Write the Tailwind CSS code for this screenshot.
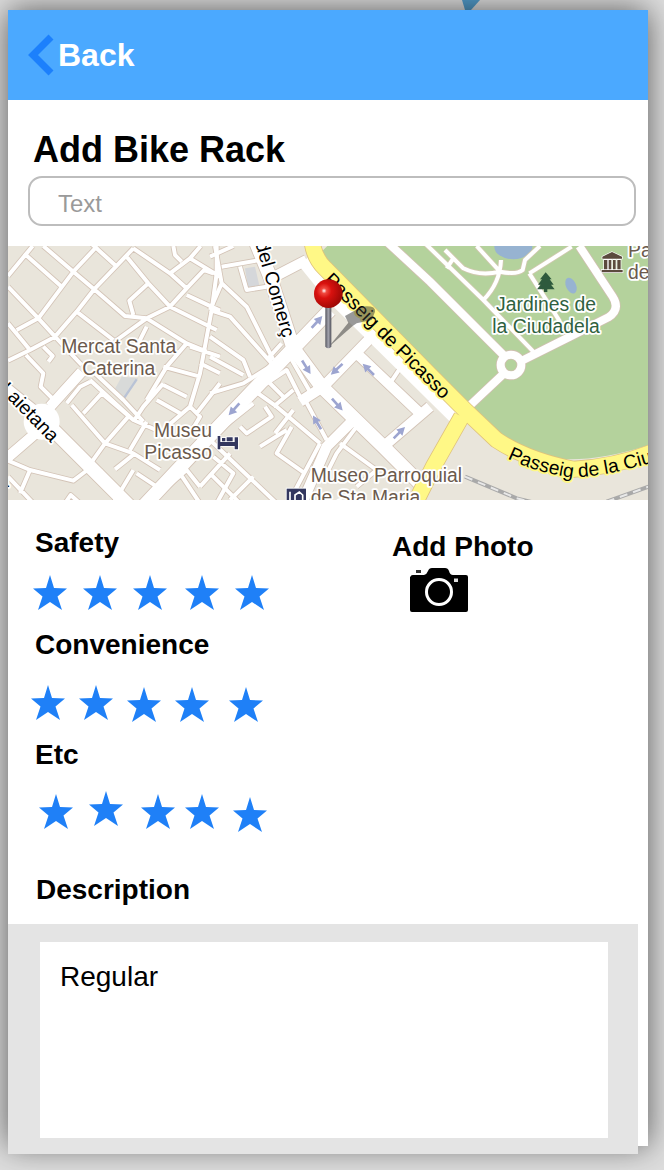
<!DOCTYPE html>
<html lang="en">
<head>
<meta charset="utf-8">
<meta name="viewport" content="width=device-width, initial-scale=1">
<title>Add Bike Rack</title>
<script src="https://cdn.jsdelivr.net/npm/@tailwindcss/browser@4"></script>
</head>
<body class="relative min-h-screen bg-[#dedede] pt-[10px] pr-4 pb-6 pl-2 font-['Liberation_Sans',Arial,sans-serif] text-black">
<svg class="absolute top-0 left-[462px] h-[10px] w-[18px]" viewBox="0 0 18 10" aria-hidden="true"><path d="M0 0H18L9 10H3Z" fill="#529ccb"/></svg>
<svg class="absolute h-0 w-0" aria-hidden="true">
  <symbol id="star" viewBox="0 0 34 35"><path d="M17 0L21 13L34 13.5L24.5 21.5L29 35L17 27L5 35L9.500 21.5L0 13.5L13 13Z" fill="#1f80f7"/></symbol>
</svg>

<main class="relative flow-root bg-white shadow-[0_0_30px_rgba(0,0,0,0.6)]">
  <header class="flex h-[90px] items-center bg-[#4ba9ff] pl-5">
    <button type="button" class="flex items-center gap-1 text-[32px] leading-9 font-bold text-white">
      <svg class="h-[42px] w-[26px]" viewBox="0 0 26 42" aria-hidden="true"><path d="M23 3L5 21L23 39" fill="none" stroke="#1c80fc" stroke-width="7"/></svg>
      Back
    </button>
  </header>

  <section class="px-5 pt-[30px] pb-5">
    <h1 class="pl-[5px] text-4xl leading-10 font-bold"><label for="rack">Add Bike Rack</label></h1>
    <input id="rack" type="text" placeholder="Text" class="mt-1.5 -mr-2 block h-[50px] w-[calc(100%+8px)] rounded-[14px] border-2 border-[#bdbdbd] bg-white px-7 pt-1.5 text-2xl text-black placeholder:text-[#9a9a9a]">
  </section>

  <svg class="block h-[254px] w-full" viewBox="24 18 1920 762" preserveAspectRatio="xMidYMid slice" role="img" aria-label="Map of the area around Passeig de Picasso">
    <defs>
      <g id="minor" fill="none" stroke-linejoin="round">
        <path d="M24 108L98 18M72 40L185 140M130 18L220 95L285 150L375 228L440 235M24 140L115 235L165 290L245 375M115 235L220 95L292 18M285 145L230 215L165 290M262 0L345 75M400 25L285 145M230 215L340 300M380 50L445 130L510 200M445 130L388 182L400 225M400 25L510 100L560 145L510 200M510 100L570 55L602 18M520 18L525 45L545 65M510 200L440 235L350 300M440 235L560 310L620 335M510 200L650 270M560 145L612 90L640 100M570 55L660 110M560 165L660 212M50 270L115 235M24 250L90 330L24 362M90 330L165 290M78 345L130 400L122 440L162 480M130 320L158 348L145 365M24 662L90 690L220 722L262 690M90 690L60 760M24 710L100 790M200 490L240 440L270 425M215 495L315 610L265 680M250 520L305 460L400 540M315 610L385 530M270 420L400 540L480 575M285 400L370 480L430 545M490 430L430 500L400 545M315 610L400 640L480 690M405 640L345 688M440 545L390 630M490 380L600 410M490 435L560 470M560 310L500 380L440 480M570 320L660 350M600 370L660 400M570 500L500 560M590 520L660 430M440 260L410 320M470 480L540 520M480 760L560 690L600 740M540 700L600 790M300 690L360 770M410 700L470 740L520 690M570 500L600 530L570 580M640 650L700 700L650 790M600 740L690 640M195 790L212 765L240 790M400 690L340 790M650 0L650 100L635 210L600 400L570 500"/>
        <g transform="translate(630 0)"><path d="M0 50L70 18M15 18L35 130L0 210M35 130L110 200L190 360M35 80L150 60M0 210L60 230L185 370M0 290L100 360L120 410M0 350L100 405M0 460L100 430L195 370M240 350L300 455M140 450L230 390L275 480M190 500L250 450M130 450L200 500L330 610M170 360L215 310M250 510L195 580M245 560L200 640L285 700M330 610L240 780M30 570L130 490M0 600L200 790M90 560L110 580L185 530L165 500M150 620L230 570M60 780L130 710M0 700L90 790M580 370L540 430M280 470L350 600M170 420L220 470M390 610L500 690M440 560L380 640L350 700M500 690L440 740M90 80L110 150L170 140"/></g>
      </g>
      <g id="major" fill="none">
        <path d="M245 395L150 500M130 560L20 655"/>
        <g transform="translate(630 0)"><path d="M290 60L165 125M340 440L480 295M440 340L625 515M660 500L520 620L600 700M430 540L350 620L280 780M340 440L270 485"/></g>
      </g>
      <g id="avenue" fill="none">
        <path d="M0 435L130 540L390 800M420 810L570 650L880 325L990 210M765 0L810 110L880 325L965 440L1150 620L1260 730"/>
      </g>
      <g id="parkwide" fill="none">
        <path d="M1155 0L1290 125L1515 350M1570 360L1710 290L1825 232Q1862 208 1838 170L1738 18M1510 402L1390 515"/><circle cx="1533" cy="375" r="31"/>
      </g>
      <g id="parkthin" fill="none">
        <path d="M1270 5L1450 180L1600 335M1335 30L1390 85Q1440 110 1500 95Q1550 105 1568 90L1575 60L1620 18M1588 100L1715 20M1588 100L1680 245M1450 180Q1500 130 1503 60M1430 18L1500 95M1360 55L1340 85"/>
      </g>
      <path id="yellow" d="M935 -10Q938 50 975 85L1290 405L1400 515L1490 600Q1580 660 1720 688Q1850 680 1960 635M1385 530L1300 680L1240 800" fill="none"/>
      <path id="ciutadella" d="M1522 655Q1610 698 1710 712Q1840 714 2100 620"/>
      <path id="arrow" d="M-24 -4H0V-13L24 0L0 13V4H-24Z" fill="#9da5d0"/>
      <linearGradient id="needle"><stop stop-color="#55565f"/><stop offset=".5" stop-color="#a3a3ad"/><stop offset="1" stop-color="#50515a"/></linearGradient>
      <radialGradient id="ball" cx=".35" cy=".4" r=".65"><stop stop-color="#fff"/><stop offset=".14" stop-color="#f04a40"/><stop offset=".4" stop-color="#d9120f"/><stop offset="1" stop-color="#9d0805"/></radialGradient>
    </defs>
    <rect x="0" y="0" width="1980" height="800" fill="#e9e5db"/>
    <path d="M735 85L765 80L780 145L745 150Z" fill="#d5d7da"/>
    <path d="M340 455L365 410L415 415L365 485Z" fill="#d8dad9"/>
    <path d="M365 485L410 418" stroke="#b9c3d6" stroke-width="7"/>
    <use href="#minor" stroke="#d3c3b6" stroke-width="17"/>
    <use href="#major" stroke="#d3c3b6" stroke-width="36"/>
    <use href="#avenue" stroke="#d3c3b6" stroke-width="46"/>
    <circle cx="125" cy="545" r="54" fill="#fff"/>
    <path d="M915 60L1000 165L1370 530" fill="none" stroke="#fff" stroke-width="50"/>
    <use href="#minor" stroke="#fff" stroke-width="12"/>
    <use href="#major" stroke="#fff" stroke-width="31"/>
    <use href="#avenue" stroke="#fff" stroke-width="41"/>
    <path d="M1000 0L960 40L1290 375L1420 505L1530 620Q1700 700 1960 610V0Z" fill="#b4d29c"/>
    <ellipse cx="1540" cy="20" rx="57" ry="38" fill="#97b3d1"/>
    <ellipse cx="1713" cy="137" rx="15" ry="25" transform="rotate(-25 1713 137)" fill="#97b3d1"/>
    <use href="#parkthin" stroke="#cfc8ae" stroke-width="17"/>
    <use href="#parkwide" stroke="#cfc0b0" stroke-width="29"/>
    <use href="#parkthin" stroke="#fff" stroke-width="12"/>
    <use href="#parkwide" stroke="#fff" stroke-width="24"/>
    <use href="#yellow" stroke="#dfc27c" stroke-width="51"/>
    <use href="#yellow" stroke="#fff886" stroke-width="46"/>
    <path d="M1395 710L1550 775L1610 790M1820 785L1960 735" fill="none" stroke="#a9a9a9" stroke-width="12"/>
    <path d="M1395 710L1550 775L1610 790M1820 785L1960 735" fill="none" stroke="#e8e8e8" stroke-width="6" stroke-dasharray="24 18"/>

    <use href="#arrow" transform="translate(951 246) rotate(-48)"/>
    <use href="#arrow" transform="translate(919 382) rotate(58)"/>
    <use href="#arrow" transform="translate(1010 388) rotate(137)"/>
    <use href="#arrow" transform="translate(1105 388) rotate(225)"/>
    <use href="#arrow" transform="translate(702 508) rotate(132)"/>
    <use href="#arrow" transform="translate(1012 494) rotate(48)"/>
    <use href="#arrow" transform="translate(951 547) rotate(240)"/>
    <use href="#arrow" transform="translate(1198 578) rotate(-45)"/>

    <path d="M653 588H661V606H704V592H714V628H704V618H661V628H653ZM666 594H676V604H666ZM680 592H698V604H680Z" fill="#33375f" stroke="#fff" stroke-width="5" paint-order="stroke"/>
    <path d="M860 746H918V790H860Z" fill="#33375f" stroke="#fff" stroke-width="5" paint-order="stroke"/>
    <path d="M870 755V780M885 780V765L898 756L908 765V780" fill="none" stroke="#fff" stroke-width="5"/>
    <path d="M1637 97L1655 118H1649L1661 134H1653L1664 148H1642V156H1632V148H1611L1622 134H1614L1626 118H1620Z" fill="#2e5a3d"/>
    <path d="M1836 36L1866 50V56H1807V50ZM1812 60H1822V88H1812ZM1826 60H1834V88H1826ZM1839 60H1847V88H1839ZM1852 60H1862V88H1852ZM1805 90H1868V97H1805Z" fill="#5b4a3e" stroke="#fff" stroke-width="4" paint-order="stroke"/>

    <g font-family="'Liberation Sans', Arial, sans-serif" font-size="58" stroke="#fff" stroke-width="11" stroke-linejoin="round" paint-order="stroke">
      <g fill="#6b5a4d" text-anchor="middle">
        <text x="356" y="338">Mercat Santa</text><text x="356" y="404">Caterina</text>
        <text x="636" y="591" text-anchor="end">Museu</text><text x="636" y="656" text-anchor="end">Picasso</text>
        <text x="932" y="727" text-anchor="start">Museo Parroquial</text><text x="932" y="793" text-anchor="start">de Sta Maria</text>
        <text x="1884" y="50" text-anchor="start">Parc</text><text x="1884" y="116" text-anchor="start">de la</text>
      </g>
      <g fill="#2f6140" text-anchor="middle"><text x="1638" y="213">Jardines de</text><text x="1638" y="278">la Ciudadela</text></g>
      <g fill="#000">
        <text transform="translate(-2 450) rotate(46)">Laietana</text>
        <text transform="translate(766 10) rotate(74)">del Comerç</text>
        <g stroke="#fff886"><text transform="translate(970 122) rotate(45)">Passeig de Picasso</text>
        <text><textPath href="#ciutadella">Passeig de la Ciutadella</textPath></text></g>
        <text x="-5" y="742">a</text>
      </g>
    </g>

    <path d="M985 322L1045 248L1035 228L1085 200Q1128 195 1125 215L1115 240L1070 250L1058 258Z" fill="#333" opacity=".5"/>
    <path d="M976 190H994V320Q985 330 976 320Z" fill="url(#needle)"/>
    <circle cx="985" cy="161" r="43" fill="url(#ball)"/>
  </svg>

  <section class="grid grid-cols-[3fr_2fr] pt-[27px]">
    <div class="pl-[23px]">
      <h2 class="ml-1 text-[28px] leading-8 font-bold">Safety</h2>
      <div class="mt-4 ml-0.5 grid grid-cols-[50px_50px_52px_50px_34px]" role="group" aria-label="Safety rating">
        <button type="button" aria-label="1 star"><svg class="h-[35px] w-[34px]"><use href="#star"/></svg></button>
        <button type="button" aria-label="2 stars"><svg class="h-[35px] w-[34px]"><use href="#star"/></svg></button>
        <button type="button" aria-label="3 stars"><svg class="h-[35px] w-[34px]"><use href="#star"/></svg></button>
        <button type="button" aria-label="4 stars"><svg class="h-[35px] w-[34px]"><use href="#star"/></svg></button>
        <button type="button" aria-label="5 stars"><svg class="h-[35px] w-[34px]"><use href="#star"/></svg></button>
      </div>
      <h2 class="mt-[19px] ml-1 text-[28px] leading-8 font-bold">Convenience</h2>
      <div class="mt-6 grid h-[37px] grid-cols-[48px_48px_48px_54px_34px] items-end" role="group" aria-label="Convenience rating">
        <button type="button" class="self-start" aria-label="1 star"><svg class="h-[35px] w-[34px]"><use href="#star"/></svg></button>
        <button type="button" class="self-start" aria-label="2 stars"><svg class="h-[35px] w-[34px]"><use href="#star"/></svg></button>
        <button type="button" aria-label="3 stars"><svg class="h-[35px] w-[34px]"><use href="#star"/></svg></button>
        <button type="button" aria-label="4 stars"><svg class="h-[35px] w-[34px]"><use href="#star"/></svg></button>
        <button type="button" aria-label="5 stars"><svg class="h-[35px] w-[34px]"><use href="#star"/></svg></button>
      </div>
      <h2 class="mt-[17px] ml-1 text-[28px] leading-8 font-bold">Etc</h2>
      <div class="mt-5 ml-2 grid h-[41px] grid-cols-[50px_52px_44px_48px_34px] items-center" role="group" aria-label="Etc rating">
        <button type="button" aria-label="1 star"><svg class="h-[35px] w-[34px]"><use href="#star"/></svg></button>
        <button type="button" class="self-start" aria-label="2 stars"><svg class="h-[35px] w-[34px]"><use href="#star"/></svg></button>
        <button type="button" aria-label="3 stars"><svg class="h-[35px] w-[34px]"><use href="#star"/></svg></button>
        <button type="button" aria-label="4 stars"><svg class="h-[35px] w-[34px]"><use href="#star"/></svg></button>
        <button type="button" class="self-end" aria-label="5 stars"><svg class="h-[35px] w-[34px]"><use href="#star"/></svg></button>
      </div>
    </div>
    <div class="pt-1">
      <button type="button" class="text-left text-[28px] leading-8 font-bold">
        Add Photo
        <svg class="mt-[5px] ml-[18px] block h-11 w-[58px]" viewBox="0 0 58 44" aria-hidden="true">
          <path d="M1 8Q1 7 3 7H14Q17 6 18 3Q19 0 22 0H35Q38 0 39 3Q40 7 43 7H56Q58 7 58 9V42Q58 44 56 44H2Q0 44 0 42V9Z"/>
          <path d="M6 2H11V5H6Z" fill="#333"/>
          <circle cx="29" cy="24" r="12.500" fill="none" stroke="#fff" stroke-width="3"/>
          <path d="M44 10.500H48V14H44Z" fill="#ddd"/>
        </svg>
      </button>
    </div>
  </section>

  <h2 class="mt-[42px] ml-7 text-[28px] leading-8 font-bold"><label for="description">Description</label></h2>
  <div class="mt-[18px] mr-[10px] -mb-2 bg-[#e4e4e4] pt-[18px] pr-[30px] pb-4 pl-8">
    <textarea id="description" class="block h-[196px] w-full resize-none bg-white px-5 pt-[19px] text-[28px] leading-8">Regular</textarea>
  </div>
</main>
</body>
</html>
